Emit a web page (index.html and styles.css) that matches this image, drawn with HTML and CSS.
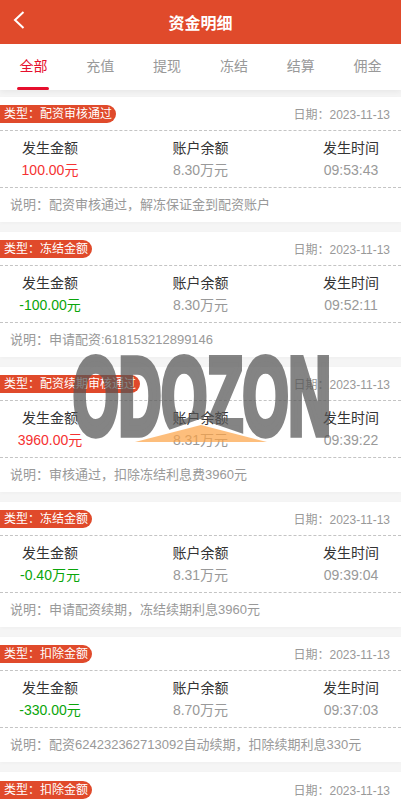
FILE: index.html
```html
<!DOCTYPE html>
<html lang="zh-CN">
<head>
    <meta charset="UTF-8">
    <meta name="viewport" content="width=device-width, initial-scale=1.0">
    <title>资金明细</title>
    <link rel="stylesheet" href="styles.css">
</head>
<body>
    <header class="topbar">
        <svg class="back" width="12" height="18" viewBox="0 0 12 18"><path d="M10.5 1 L2 9 L10.5 17" fill="none" stroke="#fff" stroke-width="2"/></svg>
        <h1>资金明细</h1>
    </header>
    <nav class="tabs">
        <a class="tab active">全部</a>
        <a class="tab">充值</a>
        <a class="tab">提现</a>
        <a class="tab">冻结</a>
        <a class="tab">结算</a>
        <a class="tab">佣金</a>
    </nav>
    <main class="list">
        <section class="card">
            <div class="card-top"><span class="tag">类型：配资审核通过</span><span class="date">日期：2023-11-13</span></div>
            <div class="stats">
                <div class="stat"><p>发生金额</p><p class="val up">100.00元</p></div>
                <div class="stat"><p>账户余额</p><p class="val">8.30万元</p></div>
                <div class="stat"><p>发生时间</p><p class="val">09:53:43</p></div>
            </div>
            <div class="note">说明：配资审核通过，解冻保证金到配资账户</div>
        </section>
        <section class="card">
            <div class="card-top"><span class="tag">类型：冻结金额</span><span class="date">日期：2023-11-13</span></div>
            <div class="stats">
                <div class="stat"><p>发生金额</p><p class="val down">-100.00元</p></div>
                <div class="stat"><p>账户余额</p><p class="val">8.30万元</p></div>
                <div class="stat"><p>发生时间</p><p class="val">09:52:11</p></div>
            </div>
            <div class="note">说明：申请配资:618153212899146</div>
        </section>
        <section class="card">
            <div class="card-top"><span class="tag">类型：配资续期审核通过</span><span class="date">日期：2023-11-13</span></div>
            <div class="stats">
                <div class="stat"><p>发生金额</p><p class="val up">3960.00元</p></div>
                <div class="stat"><p>账户余额</p><p class="val">8.31万元</p></div>
                <div class="stat"><p>发生时间</p><p class="val">09:39:22</p></div>
            </div>
            <div class="note">说明：审核通过，扣除冻结利息费3960元</div>
        </section>
        <section class="card">
            <div class="card-top"><span class="tag">类型：冻结金额</span><span class="date">日期：2023-11-13</span></div>
            <div class="stats">
                <div class="stat"><p>发生金额</p><p class="val down">-0.40万元</p></div>
                <div class="stat"><p>账户余额</p><p class="val">8.31万元</p></div>
                <div class="stat"><p>发生时间</p><p class="val">09:39:04</p></div>
            </div>
            <div class="note">说明：申请配资续期，冻结续期利息3960元</div>
        </section>
        <section class="card">
            <div class="card-top"><span class="tag">类型：扣除金额</span><span class="date">日期：2023-11-13</span></div>
            <div class="stats">
                <div class="stat"><p>发生金额</p><p class="val down">-330.00元</p></div>
                <div class="stat"><p>账户余额</p><p class="val">8.70万元</p></div>
                <div class="stat"><p>发生时间</p><p class="val">09:37:03</p></div>
            </div>
            <div class="note">说明：配资624232362713092自动续期，扣除续期利息330元</div>
        </section>
        <section class="card last">
            <div class="card-top"><span class="tag">类型：扣除金额</span><span class="date">日期：2023-11-13</span></div>
        </section>
    </main>
    <div class="watermark">
        <span class="mark-text">ODOZON</span>
    </div>
    <svg class="mark-roof" width="132" height="17" viewBox="0 0 132 17"><path d="M0 17 L66 0 L132 17 Z" fill="#fca245" fill-opacity="0.7"/></svg>
</body>
</html>
```

FILE: styles.css
```css
html, body {
    height: 800px;
    overflow: hidden;
}
body {
    margin: 0;
    background-color: #f5f5f5;
    color: #333;
    font-family: "Liberation Sans", "Noto Sans CJK SC", sans-serif;
}
p {
    margin: 0;
}
.topbar {
    display: flex;
    align-items: center;
    justify-content: center;
    position: relative;
    height: 44px;
    background-color: #e04a2b;
}
.topbar h1 {
    margin: 0;
    font-size: 16px;
    font-weight: bold;
    color: #fff;
}
.back {
    position: absolute;
    left: 13px;
    top: 11px;
}
.tabs {
    display: grid;
    grid-template-columns: repeat(6, 1fr);
    height: 46px;
    background-color: #fff;
    box-shadow: 0 2px 6px rgba(0,0,0,0.06);
}
.tab {
    display: flex;
    justify-content: center;
    padding-top: 12px;
    font-size: 14px;
    line-height: 20px;
    color: #999;
    position: relative;
}
.tab.active {
    color: #e60f2d;
}
.tab.active::after {
    content: "";
    position: absolute;
    left: 17px;
    bottom: 0;
    width: 32px;
    height: 3px;
    border-radius: 2px;
    background-color: #e60f2d;
}
.list {
    display: flex;
    flex-direction: column;
    gap: 10px;
    padding-top: 7px;
}
.card {
    flex: none;
    height: 125px;
    background-color: #fff;
    box-shadow: 0 1px 4px rgba(0,0,0,0.03);
}
.card.last {
    height: 28px;
}
.card-top {
    display: flex;
    align-items: center;
    justify-content: space-between;
    height: 34px;
    padding: 0 11px 0 0;
    border-bottom: 1px dashed #c4c4c4;
    box-sizing: border-box;
}
.card.last .card-top {
    height: 28px;
    align-items: flex-start;
    padding-top: 9px;
    border-bottom: none;
}
.tag {
    height: 18px;
    padding: 0 4px;
    border-radius: 0 9px 9px 0;
    background-color: #e04a2b;
    color: #fff;
    font-size: 12px;
    line-height: 18px;
}
.date {
    font-size: 12px;
    color: #999;
}
.stats {
    display: grid;
    grid-template-columns: repeat(3, 100px);
    justify-content: space-between;
    height: 57px;
    box-sizing: border-box;
    padding-top: 6px;
    border-bottom: 1px dashed #c4c4c4;
    text-align: center;
    font-size: 14px;
    line-height: 22px;
}
.val {
    color: #999;
}
.val.up {
    color: #f53232;
}
.val.down {
    color: #0aa50a;
}
.note {
    padding: 8px 10px 0;
    font-size: 13px;
    line-height: 18px;
    color: #999;
}
/* watermark lies over the list, roof shape is cut out of the letters */
.watermark {
    position: absolute;
    left: 71px;
    top: 350px;
    width: 263px;
    height: 92px;
    overflow: hidden;
    opacity: 0.72;
    clip-path: polygon(0 0, 100% 0, 100% 100%, 196px 100%, 129px 69px, 64px 100%, 0 100%);
}
.mark-text {
    position: absolute;
    left: 2px;
    top: -8px;
    font-family: "Liberation Sans", sans-serif;
    font-size: 60px;
    font-weight: bold;
    line-height: 60px;
    white-space: nowrap;
    color: #555;
    -webkit-text-stroke: 4px #555;
    transform-origin: 0 0;
    transform: scale(0.98, 1.83);
}
.mark-roof {
    position: absolute;
    left: 135px;
    top: 425px;
}
```
